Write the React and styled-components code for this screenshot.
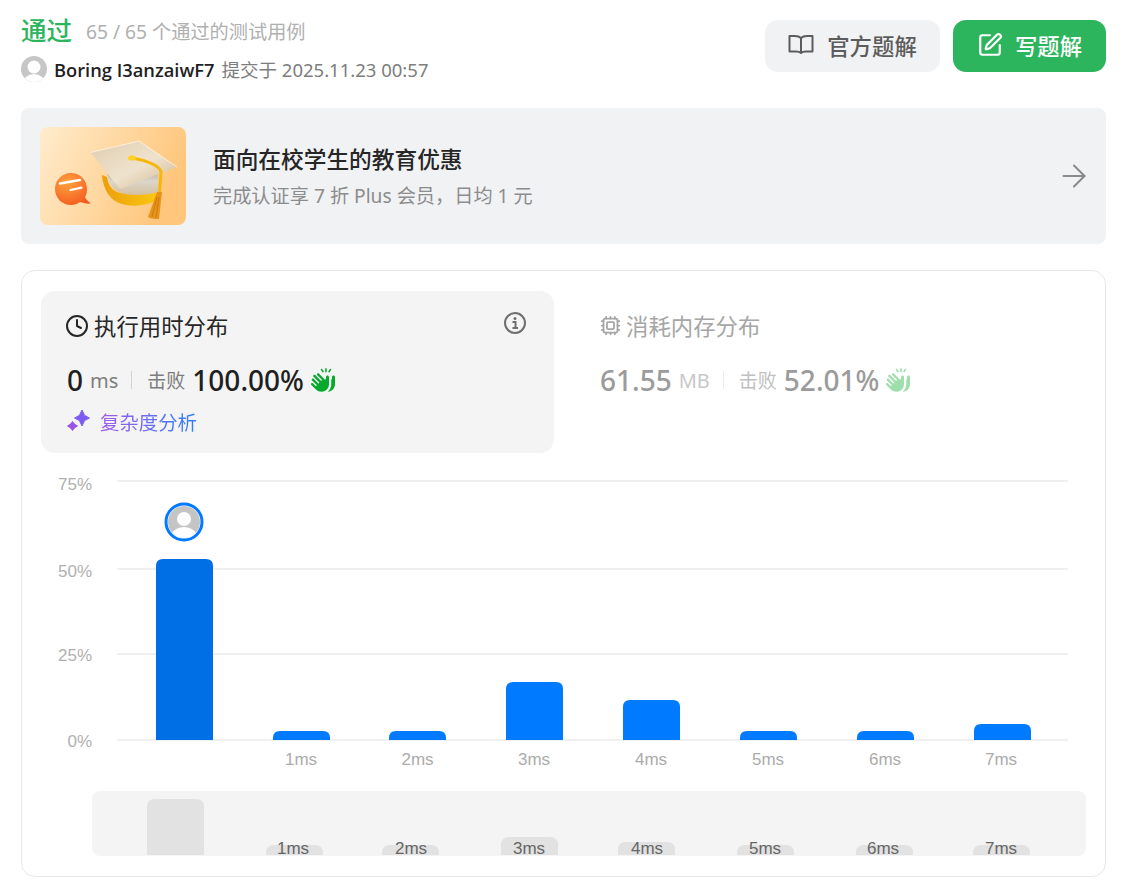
import React from 'react';
import styled, { createGlobalStyle } from 'styled-components';
import { ArrowRight, Clock, Cpu, SquarePen } from 'lucide-react';
import { FaHandsClapping } from 'react-icons/fa6';

const GlobalStyle = createGlobalStyle`
  html, body {
    margin: 0;
    padding: 0;
    background: #fff;
  }
  * {
    box-sizing: border-box;
  }
  body {
    font-family: "Noto Sans", "Noto Sans CJK SC", sans-serif;
  }
`;

const Page = styled.div`
  width: 1124px;
  height: 885px;
  padding: 18px 18px 0 21px;
  overflow: hidden;
`;

// Header with result and buttons
const Header = styled.div`
  display: flex;
  justify-content: space-between;
  align-items: flex-start;
  height: 90px;
`;

const ResultLine = styled.div`
  display: flex;
  align-items: center;
  height: 26px;
  gap: 14px;
`;

const Accepted = styled.span`
  font-size: 25.5px;
  font-weight: 500;
  line-height: 26px;
  margin-top: -2px;
  color: #2db55d;
`;

const CaseCount = styled.span`
  font-size: 19.2px;
  color: #b0b0b0;
`;

const SubmitLine = styled.div`
  display: flex;
  align-items: center;
  height: 26px;
  margin-top: 12px;
`;

// Open Sans here: its capital I has no serifs, as in the reference
const UserName = styled.span`
  font-family: "Open Sans", sans-serif;
  font-size: 18.3px;
  font-weight: 600;
  color: #1f1f1f;
  margin-left: 7px;
`;

const SubmitTime = styled.span`
  font-size: 18.5px;
  color: #7d7d7d;
  margin-left: 7px;
`;

const Actions = styled.div`
  display: flex;
  gap: 13px;
  margin-top: 2px;
`;

const ActionButton = styled.button`
  height: 52px;
  width: ${(props) => props.$width}px;
  display: flex;
  align-items: center;
  justify-content: center;
  gap: ${(props) => (props.$primary ? 12 : 13)}px;
  padding: 0 0 2px;
  border: none;
  border-radius: 13px;
  font-family: inherit;
  font-size: 22.4px;
  font-weight: 500;
  background-color: ${(props) => (props.$primary ? '#2db55d' : '#f1f2f4')};
  color: ${(props) => (props.$primary ? '#fff' : '#5c5c5c')};
`;

// Education banner
const Banner = styled.div`
  height: 136px;
  display: flex;
  align-items: center;
  padding: 0 19px;
  background-color: #f1f2f4;
  border-radius: 8px;
`;

const BannerArt = styled.svg`
  width: 146px;
  height: 98px;
  flex-shrink: 0;
`;

const BannerText = styled.div`
  flex: 1;
  margin-left: 27px;
  padding-top: 2px;
`;

const BannerTitle = styled.div`
  font-size: 22.7px;
  line-height: 32px;
  font-weight: 500;
  color: #262626;
`;

const BannerSub = styled.div`
  font-size: 19.2px;
  line-height: 28px;
  margin-top: 6px;
  color: #8c8c8c;
`;

const BannerArrow = styled(ArrowRight)`
  width: 36px;
  height: 36px;
  flex-shrink: 0;
  color: #8a8a8a;
  margin-right: -5px;
`;

// Main card
const Card = styled.div`
  height: 607px;
  margin-top: 26px;
  padding: 20px 19px 0;
  border: 1px solid #e8e8e8;
  border-radius: 14px;
`;

const Tabs = styled.div`
  display: flex;
  gap: 20px;
`;

const Tab = styled.div`
  position: relative;
  width: ${(props) => props.$width}px;
  height: 162px;
  padding: 19px 26px 0;
  border-radius: 14px;
  background-color: ${(props) => (props.$active ? '#f4f4f4' : 'transparent')};
`;

const TabTitle = styled.div`
  display: flex;
  align-items: center;
  gap: 5px;
  height: 30px;
  font-size: 22.4px;
  color: ${(props) => (props.$active ? '#262626' : '#a6a6a6')};
`;

const TitleClock = styled(Clock)`
  margin-left: -2px;
  margin-top: 1px;
  color: #262626;
`;

const TitleCpu = styled(Cpu)`
  margin-top: 1px;
  color: #a6a6a6;
`;

const InfoIcon = styled.svg`
  position: absolute;
  top: 20px;
  right: 27px;
  width: 24px;
  height: 24px;
  color: #6e6e6e;
`;

const Stats = styled.div`
  display: flex;
  align-items: center;
  height: 40px;
  margin-top: 20px;
`;

const StatValue = styled.span`
  font-size: 28px;
  font-weight: 500;
  color: ${(props) => (props.$active ? '#1f1f1f' : '#9b9b9b')};
`;

const StatUnit = styled.span`
  font-size: 20px;
  margin-left: 7px;
  color: ${(props) => (props.$active ? '#7d7d7d' : '#c8c8c8')};
`;

const StatDivider = styled.span`
  width: 1px;
  height: 18px;
  margin: 0 15px 0 13px;
  background-color: ${(props) => (props.$active ? '#d4d4d4' : '#ececec')};
`;

const StatLabel = styled.span`
  font-size: 19px;
  margin-right: 7px;
  color: ${(props) => (props.$active ? '#7d7d7d' : '#c0c0c0')};
`;

const Clap = styled(FaHandsClapping)`
  width: 24px;
  height: 24px;
  margin-left: 7px;
  color: ${(props) => (props.$active ? '#07a92d' : '#9fdfae')};
`;

const Analysis = styled.div`
  display: flex;
  align-items: center;
  gap: 9px;
  height: 30px;
  margin-top: 6px;
`;

const AnalysisText = styled.span`
  font-size: 19.4px;
  background: linear-gradient(90deg, #a35be8, #2f80ff);
  -webkit-background-clip: text;
  background-clip: text;
  color: transparent;
`;

const ChartBox = styled.svg`
  display: block;
  width: 1084px;
  height: 423px;
  margin-left: -20px;
`;

const gridLines = [
  { label: '75%', y: 28, ty: 37 },
  { label: '50%', y: 116, ty: 124 },
  { label: '25%', y: 201, ty: 208 },
  { label: '0%', y: 287, ty: 294 },
];

const bars = [
  { x: 135, h: 181, label: '', active: true },
  { x: 252, h: 9, label: '1ms', tx: 280 },
  { x: 368, h: 9, label: '2ms', tx: 396.5 },
  { x: 485, h: 58, label: '3ms', tx: 513 },
  { x: 602, h: 40, label: '4ms', tx: 630 },
  { x: 719, h: 9, label: '5ms', tx: 747 },
  { x: 836, h: 9, label: '6ms', tx: 864 },
  { x: 953, h: 16, label: '7ms', tx: 980 },
];

const brushBars = [
  { x: 126, h: 56, label: '' },
  { x: 245, h: 10, label: '1ms', tx: 272 },
  { x: 361, h: 10, label: '2ms', tx: 390 },
  { x: 480, h: 18, label: '3ms', tx: 508 },
  { x: 597, h: 13, label: '4ms', tx: 626 },
  { x: 716, h: 10, label: '5ms', tx: 744 },
  { x: 835, h: 10, label: '6ms', tx: 862 },
  { x: 952, h: 10, label: '7ms', tx: 980 },
];

// bar with rounded top corners only
const barPath = (x, bottom, h, w = 57, r = 7) => {
  const rr = Math.min(r, h);
  return `M${x} ${bottom}V${bottom - h + rr}Q${x} ${bottom - h} ${x + rr} ${bottom - h}H${x + w - rr}Q${x + w} ${bottom - h} ${x + w} ${bottom - h + rr}V${bottom}Z`;
};

const Chart = () => (
  <ChartBox viewBox="0 0 1084 423">
    <defs>
      <clipPath id="avatarClip">
        <circle cx="163" cy="69" r="16" />
      </clipPath>
      <clipPath id="brushClip">
        <rect x="71" y="338" width="994" height="65" rx="8" />
      </clipPath>
    </defs>
    <g fontFamily='"Liberation Sans", Arial, sans-serif' fontSize="17">
      {gridLines.map((line) => (
        <g key={line.label}>
          <line x1="96" x2="1047" y1={line.y} y2={line.y} stroke="#e9ebee" strokeWidth="1.5" />
          <text x="71" y={line.ty} textAnchor="end" fill="#b0b0b0">{line.label}</text>
        </g>
      ))}
      {bars.map((bar) => (
        <g key={bar.x}>
          <path d={barPath(bar.x, 287, bar.h)} fill={bar.active ? '#006fe6' : '#007aff'} />
          {bar.label && (
            <text x={bar.tx} y="312" textAnchor="middle" fill="#ababab">{bar.label}</text>
          )}
        </g>
      ))}
      <circle cx="163" cy="69" r="18" fill="#fff" stroke="#007aff" strokeWidth="3" />
      <circle cx="163" cy="69" r="16" fill="#c4c4c4" />
      <g clipPath="url(#avatarClip)" fill="#fff">
        <circle cx="163" cy="66" r="7" />
        <ellipse cx="163" cy="84" rx="13" ry="10" />
      </g>
      <rect x="71" y="338" width="994" height="65" rx="8" fill="#f4f4f4" />
      <g clipPath="url(#brushClip)">
        {brushBars.map((bar) => (
          <g key={bar.x}>
            <path d={barPath(bar.x, 402, bar.h, 57, 8)} fill="#e2e2e2" />
            {bar.label && (
              <text x={bar.tx} y="401" textAnchor="middle" fill="#666">{bar.label}</text>
            )}
          </g>
        ))}
      </g>
    </g>
  </ChartBox>
);

const GradCap = () => (
  <BannerArt viewBox="0 0 146 98">
    <defs>
      <linearGradient id="artBg" x1="0" x2="1" y1="0" y2="0.3">
        <stop offset="0" stopColor="#ffeccd" />
        <stop offset="1" stopColor="#ffc67c" />
      </linearGradient>
      <linearGradient id="capTop" x1="0" x2="1" y1="0" y2="1">
        <stop offset="0" stopColor="#dfcdb0" />
        <stop offset="0.55" stopColor="#efe2cd" />
        <stop offset="1" stopColor="#cfb58c" />
      </linearGradient>
      <linearGradient id="capBody" x1="0" x2="0" y1="0" y2="1">
        <stop offset="0" stopColor="#a9a298" />
        <stop offset="0.5" stopColor="#ddd6ca" />
        <stop offset="1" stopColor="#d3bf9f" />
      </linearGradient>
      <linearGradient id="capBand" x1="0" x2="1" y1="0" y2="0">
        <stop offset="0" stopColor="#eb9f0c" />
        <stop offset="1" stopColor="#fbc70f" />
      </linearGradient>
      <radialGradient id="bubble" cx="0.35" cy="0.3" r="0.8">
        <stop offset="0" stopColor="#ffa23e" />
        <stop offset="1" stopColor="#f2581e" />
      </radialGradient>
    </defs>
    <rect width="146" height="98" rx="8" fill="url(#artBg)" />
    <path d="M15 62C15 53 22 46 31 46C40 46 47 53 47 62C47 65 46.5 68 45 70C46.5 73 48.5 75 51 76.5C47 77 43 76 40 75C37.5 77 34.5 78 31 78C22 78 15 71 15 62Z" fill="url(#bubble)" />
    <path d="M20 56.5L40 53" stroke="#fff" strokeWidth="2.4" strokeLinecap="round" />
    <path d="M30.5 63L41.5 60.7" stroke="#fff" strokeWidth="2.2" strokeLinecap="round" />
    <path d="M67 40L118 44V66C104 70 84 70 74 62C69 57 67 50 67 40Z" fill="url(#capBody)" />
    <path d="M72 40L78 60L90 50L84 38Z" fill="#ebe5da" />
    <path d="M62 48L67 50C68 57 71 62 77 65C88 69 106 69 118 65V73C106 79 92 80 82 77C70 74 63 62 62 48Z" fill="url(#capBand)" />
    <path d="M50.5 25.5L99 14L137 40L80 62Z" fill="url(#capTop)" />
    <path d="M50.5 25.5L99 14L137 40" fill="none" stroke="#fff6e8" strokeWidth="0.8" />
    <path d="M92 31C104 33 120 38 121 45L119.5 66" fill="none" stroke="#f5b80a" strokeWidth="3" />
    <ellipse cx="92" cy="31" rx="4" ry="2.6" fill="#ffd21e" />
    <path d="M117 65H122L119 92C116 92 111 92 108 90Z" fill="#e8941a" />
    <path d="M117 70L112 90M119 70L116 91" stroke="#c8720e" strokeWidth="0.8" />
  </BannerArt>
);

const BookIcon = () => (
  <svg width="26" height="26" viewBox="0 0 26 26" fill="none" stroke="#5c5c5c" strokeWidth="2" strokeLinejoin="round">
    <path d="M13 6C11.5 4.5 9.5 4 7 4H1.5V19.5H8C10.5 19.5 12 20 13 21C14 20 15.5 19.5 18 19.5H24.5V4H19C16.5 4 14.5 4.5 13 6Z" />
    <path d="M13 6V21" />
  </svg>
);

const Sparkle = () => (
  <svg width="24" height="24" viewBox="0 0 24 24" strokeLinejoin="round">
    <path d="M15 1L17.6 6.4L22.5 9L17.6 11.6L15 17L12.4 11.6L7.5 9L12.4 6.4Z" fill="#7c5cf0" stroke="#7c5cf0" strokeWidth="1" />
    <path d="M5.5 12.5L7.4 15.1L10.5 17L7.4 18.9L5.5 21.5L3.6 18.9L0.5 17L3.6 15.1Z" fill="#9a55e6" stroke="#9a55e6" strokeWidth="1" />
  </svg>
);

const SmallAvatar = () => (
  <svg width="26" height="26" viewBox="0 0 26 26">
    <defs>
      <clipPath id="smallAvatar">
        <circle cx="13" cy="13" r="13" />
      </clipPath>
    </defs>
    <circle cx="13" cy="13" r="13" fill="#c6c6c6" />
    <g clipPath="url(#smallAvatar)" fill="#fff">
      <circle cx="13" cy="11" r="6.5" />
      <ellipse cx="13" cy="27" rx="11" ry="9" />
    </g>
  </svg>
);

const App = () => (
  <Page>
    <GlobalStyle />
    <Header>
      <div>
        <ResultLine>
          <Accepted>通过</Accepted>
          <CaseCount>65 / 65 个通过的测试用例</CaseCount>
        </ResultLine>
        <SubmitLine>
          <SmallAvatar />
          <UserName>Boring I3anzaiwF7</UserName>
          <SubmitTime>提交于 2025.11.23 00:57</SubmitTime>
        </SubmitLine>
      </div>
      <Actions>
        <ActionButton $width={175}>
          <BookIcon />
          官方题解
        </ActionButton>
        <ActionButton $width={153} $primary>
          <SquarePen size={26} />
          写题解
        </ActionButton>
      </Actions>
    </Header>

    <Banner>
      <GradCap />
      <BannerText>
        <BannerTitle>面向在校学生的教育优惠</BannerTitle>
        <BannerSub>完成认证享 7 折 Plus 会员，日均 1 元</BannerSub>
      </BannerText>
      <BannerArrow strokeWidth={1.4} />
    </Banner>

    <Card>
      <Tabs>
        <Tab $width={513} $active>
          <TabTitle $active>
            <TitleClock size={24} strokeWidth={2} />
            执行用时分布
          </TabTitle>
          <InfoIcon viewBox="0 0 24 24" fill="none" stroke="currentColor">
            <circle cx="12" cy="12" r="10" strokeWidth="2" />
            <circle cx="12" cy="7.4" r="1.5" fill="currentColor" stroke="none" />
            <path d="M9.5 11H12.5V16.5M9.5 17H15" strokeWidth="2" />
          </InfoIcon>
          <Stats>
            <StatValue $active>0</StatValue>
            <StatUnit $active>ms</StatUnit>
            <StatDivider $active />
            <StatLabel $active>击败</StatLabel>
            <StatValue $active>100.00%</StatValue>
            <Clap $active />
          </Stats>
          <Analysis>
            <Sparkle />
            <AnalysisText>复杂度分析</AnalysisText>
          </Analysis>
        </Tab>
        <Tab $width={510}>
          <TabTitle>
            <TitleCpu size={21} strokeWidth={2} />
            消耗内存分布
          </TabTitle>
          <Stats>
            <StatValue>61.55</StatValue>
            <StatUnit>MB</StatUnit>
            <StatDivider />
            <StatLabel>击败</StatLabel>
            <StatValue>52.01%</StatValue>
            <Clap />
          </Stats>
        </Tab>
      </Tabs>
      <Chart />
    </Card>
  </Page>
);

export default App;
